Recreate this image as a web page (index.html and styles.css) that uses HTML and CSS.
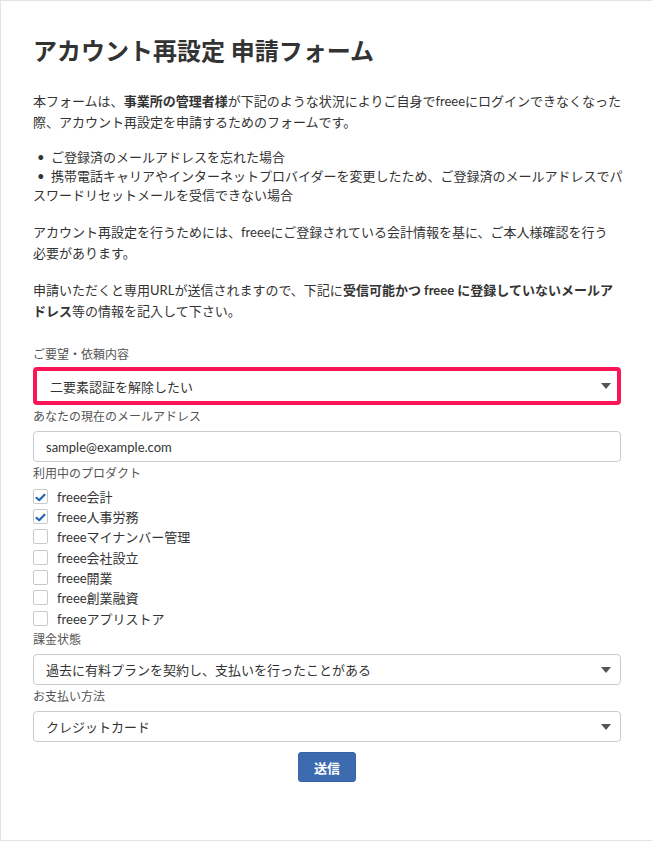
FILE: index.html
```html
<!DOCTYPE html>
<html lang="ja">
<head>
<meta charset="utf-8">
<title>アカウント再設定 申請フォーム</title>
<link rel="stylesheet" href="styles.css">
</head>
<body>
<div class="card">
  <h1 class="title">アカウント再設定 申請フォーム</h1>
  <p class="text p1">本フォームは、<b>事業所の管理者様</b>が下記のような状況によりご自身でfreeeにログインできなくなった際、アカウント再設定を申請するためのフォームです。</p>
  <ul class="bullets">
    <li>ご登録済のメールアドレスを忘れた場合</li>
    <li>携帯電話キャリアやインターネットプロバイダーを変更したため、ご登録済のメールアドレスでパ<br>スワードリセットメールを受信できない場合</li>
  </ul>
  <p class="text p3 nowrap">アカウント再設定を行うためには、freeeにご登録されている会計情報を基に、ご本人様確認を行う<br>必要があります。</p>
  <p class="text p4">申請いただくと専用URLが送信されますので、下記に<b>受信可能かつ freee に登録していないメールアドレス</b>等の情報を記入して下さい。</p>

  <form class="form">
    <div class="field">
      <div class="label">ご要望・依頼内容</div>
      <div class="select highlight"><span>二要素認証を解除したい</span></div>
    </div>
    <div class="field">
      <div class="label">あなたの現在のメールアドレス</div>
      <div class="input"><span>sample@example.com</span></div>
    </div>
    <div class="field">
      <div class="label label-tight">利用中のプロダクト</div>
      <div class="checks">
        <div class="check"><span class="box"><svg width="11" height="9" viewBox="0 0 11 9"><path d="M1.5 4.8 L4.2 7.2 L9.5 1.8" fill="none" stroke="#2067b3" stroke-width="2.2" stroke-linecap="round" stroke-linejoin="round"/></svg></span><span>freee会計</span></div>
        <div class="check"><span class="box"><svg width="11" height="9" viewBox="0 0 11 9"><path d="M1.5 4.8 L4.2 7.2 L9.5 1.8" fill="none" stroke="#2067b3" stroke-width="2.2" stroke-linecap="round" stroke-linejoin="round"/></svg></span><span>freee人事労務</span></div>
        <div class="check"><span class="box"></span><span>freeeマイナンバー管理</span></div>
        <div class="check"><span class="box"></span><span>freee会社設立</span></div>
        <div class="check"><span class="box"></span><span>freee開業</span></div>
        <div class="check"><span class="box"></span><span>freee創業融資</span></div>
        <div class="check"><span class="box"></span><span>freeeアプリストア</span></div>
      </div>
    </div>
    <div class="field">
      <div class="label">課金状態</div>
      <div class="select"><span>過去に有料プランを契約し、支払いを行ったことがある</span></div>
    </div>
    <div class="field">
      <div class="label">お支払い方法</div>
      <div class="select"><span>クレジットカード</span></div>
    </div>
    <div class="actions">
      <button type="button" class="submit">送信</button>
    </div>
  </form>
</div>
</body>
</html>
```
FILE: styles.css
```css
html, body {
  margin: 0;
  padding: 0;
  background: #ffffff;
  overflow: hidden;
}
body {
  font-family: Lato, "Noto Sans CJK JP", sans-serif;
  color: #333333;
}
.card {
  box-sizing: border-box;
  width: 654px;
  height: 841px;
  border: 1px solid #e6e4df;
  padding: 34px 32px 0 32px;
  background: #ffffff;
}
.title {
  margin: 0 0 24px 0;
  font-size: 24px;
  line-height: 32px;
  font-weight: 700;
  color: #333333;
  letter-spacing: 0;
}
.text {
  margin: 0;
  font-size: 13px;
  line-height: 21px;
}
.text b {
  font-weight: 700;
}
.nowrap {
  white-space: nowrap;
}
.p1 { margin-bottom: 15px; }
.p3 { margin-bottom: 16px; }
.p4 { margin-bottom: 24px; }
.bullets {
  list-style: none;
  margin: 0 0 17px 0;
  padding: 0;
  font-size: 13px;
  line-height: 19px;
  white-space: nowrap;
}
.bullets li::before {
  content: "•";
  display: inline-block;
  width: 14px;
  margin-left: 4px;
}
.form {
  margin: 0;
}
.field {
  margin-bottom: 3px;
}
.label {
  font-size: 12px;
  line-height: 18px;
  color: #555555;
  margin-bottom: 5px;
}
.label-tight {
  margin-bottom: 3px;
}
.select, .input {
  position: relative;
  box-sizing: border-box;
  height: 31px;
  border: 1px solid #cccccc;
  border-radius: 4px;
  padding: 0 12px;
  display: flex;
  align-items: center;
  font-size: 13px;
  color: #333333;
  background: #ffffff;
}
.select::after {
  content: "";
  position: absolute;
  right: 9px;
  top: 50%;
  margin-top: -3px;
  border-left: 5px solid transparent;
  border-right: 5px solid transparent;
  border-top: 6px solid #555555;
}
.select.highlight {
  height: 38px;
  border: 4px solid #fb1556;
  border-radius: 4px;
  padding-left: 13px;
  margin-top: -2px;
}
.select.highlight::after {
  right: 6px;
}
.checks {
  display: flex;
  flex-direction: column;
}
.check {
  height: 20.33px;
  display: flex;
  align-items: center;
  font-size: 13px;
  color: #333333;
}
.box {
  box-sizing: border-box;
  width: 15px;
  height: 15px;
  border: 1px solid #c9c9c9;
  border-radius: 2px;
  margin-right: 9px;
  display: flex;
  align-items: center;
  justify-content: center;
  background: #ffffff;
}
.box svg {
  display: block;
  margin-top: 2px;
}
.actions {
  display: flex;
  justify-content: center;
  margin-top: 10px;
}
.submit {
  box-sizing: border-box;
  width: 58px;
  height: 30px;
  border: 1px solid #3565a8;
  border-radius: 3px;
  background: #3d6bb0;
  color: #ffffff;
  font-family: Lato, "Noto Sans CJK JP", sans-serif;
  font-size: 13px;
  font-weight: 700;
  padding: 0;
}
```
